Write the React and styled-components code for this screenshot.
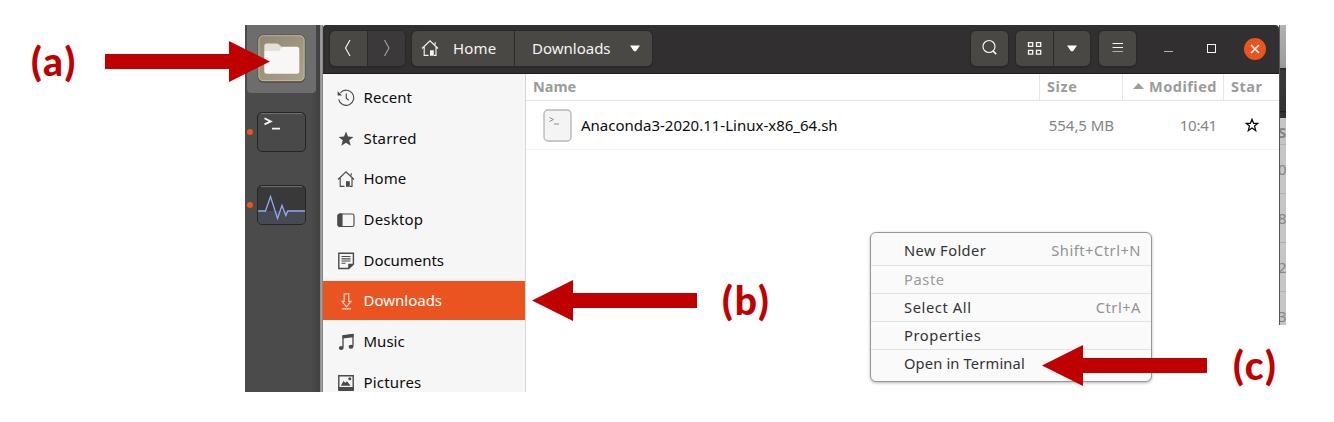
import React from "react";
import styled, { createGlobalStyle } from "styled-components";

const Global = createGlobalStyle`
  * { box-sizing: border-box; }
  body { margin: 0; background: #fff; font-family: "Noto Sans", "Open Sans", sans-serif; font-size: 15px; }
  svg { display: block; flex: none; }
`;

const Page = styled.main`
  position: relative;
  width: 1334px;
  height: 422px;
  overflow: hidden;
  padding: 25px 0 0 245px;
`;
const Desktop = styled.div`
  display: flex;
  width: 1041px;
  height: 367px;
  overflow: hidden;
`;
const Text = styled.span`
  letter-spacing: ${(p) => p.$ls || 0}px;
  white-space: pre;
`;

/* dock */
const Dock = styled.aside`
  width: 75px;
  background: linear-gradient(90deg, #4b4b4b 0, #4b4b4b 66px, #414141 74px);
`;
const DockSlot = styled.div`
  display: flex;
  align-items: center;
  height: ${(p) => p.$h}px;
  padding-left: 2px;
`;
const ActiveSlot = styled.div`
  width: 69px;
  height: 68px;
  margin-left: 2px;
  padding: 9px 0 0 10px;
  background: #6d6d6d;
  border-radius: 0 0 4px 4px;
`;
const Dot = styled.i`
  width: 6px;
  height: 6px;
  border-radius: 50%;
  background: #e95420;
  margin-right: 4px;
`;
const Edge = styled.div`
  width: 3px;
  background: linear-gradient(90deg, #8b8b8b, #a0a0a0 50%, #777);
`;

/* window */
const Window = styled.section`
  width: 956px;
  display: flex;
  flex-direction: column;
  background: #fff;
`;
const HeaderBar = styled.header`
  display: flex;
  align-items: flex-start;
  height: 49px;
  padding: 6px 13px 0 7px;
  background: #322f30;
  border-bottom: 1px solid #1c1a1b;
  border-radius: 3px 4px 0 0;
`;
const ButtonGroup = styled.div`
  display: flex;
  height: 35px;
  margin-left: ${(p) => p.$gap || 0}px;
  border-radius: 5px;
  overflow: hidden;
  background: #4a4845;
  box-shadow: 0 0 0 1px #2a2828, 0 1px 2px #1f1d1d;
`;
const HeaderButton = styled.button`
  display: flex;
  align-items: center;
  justify-content: ${(p) => (p.$start ? "flex-start" : "center")};
  width: ${(p) => p.$w || 37}px;
  padding: 0 0 1px ${(p) => p.$start || 0}px;
  gap: ${(p) => p.$space || 0}px;
  border: 0;
  background: ${(p) => (p.$dim ? "#3b3939" : "transparent")};
  color: #f5f5f3;
  font: inherit;
  & + & { border-left: 1px solid #2b2929; }
`;
const Spacer = styled.div`flex: 1;`;
const Controls = styled.div`
  display: flex;
  align-items: center;
  height: 35px;
  margin-left: 28px;
`;
const Minimize = styled.i`
  width: 9px;
  height: 1px;
  margin-top: 6px;
  background: #b5b4b4;
`;
const Maximize = styled.i`
  width: 9px;
  height: 9px;
  margin: 0 28px 0 34px;
  border: 1px solid #f5f5f5;
`;
const Close = styled.div`
  display: grid;
  place-items: center;
  width: 22px;
  height: 22px;
  border-radius: 50%;
  background: #e95420;
`;
const Body = styled.div`
  display: flex;
  flex: 1;
  min-height: 0;
`;
const Sidebar = styled.nav`
  display: flex;
  flex-direction: column;
  gap: 1.7px;
  width: 203px;
  padding-top: 4px;
  background: #f6f6f6;
  border-right: 1px solid #d6d6d6;
  overflow: hidden;
`;
const Place = styled.div`
  display: flex;
  align-items: center;
  flex: none;
  gap: 8.5px;
  height: 39px;
  padding: 0 0 1px 14px;
  color: ${(p) => (p.$active ? "#fff" : "#0c0c0c")};
  background: ${(p) => (p.$active ? "#e95420" : "transparent")};
  svg { color: ${(p) => (p.$active ? "#fbd3c5" : "#4a4a4a")}; position: relative; top: 1px; }
`;
const Files = styled.div`flex: 1;`;
const Columns = styled.div`
  display: grid;
  grid-template-columns: 514px 83px 101px 55px;
  height: 27px;
  border-bottom: 1px solid #e2e2e2;
  color: #9b9b9b;
  font-weight: 700;
  font-size: 14.5px;
`;
const Column = styled.div`
  display: flex;
  align-items: center;
  justify-content: ${(p) => (p.$end ? "flex-end" : "flex-start")};
  gap: 5px;
  padding: 0 6px 2px 7px;
  border-right: 1px solid #e6e6e6;
  &:last-child { border: 0; }
`;
const FileRow = styled.div`
  display: grid;
  grid-template-columns: 514px 83px 101px 55px;
  height: 49px;
  border-bottom: 1px solid #f2f2f2;
  color: #858585;
`;
const Cell = styled.div`
  display: flex;
  align-items: center;
  justify-content: ${(p) => p.$align || "flex-end"};
  padding-right: ${(p) => p.$right || 0}px;
`;
const NameCell = styled.div`
  display: flex;
  align-items: center;
  gap: 9px;
  padding-left: 17px;
  color: #0c0c0c;
`;
const Behind = styled.div`
  width: 7px;
  height: 300px;
  border-left: 1px solid #555;
  background: linear-gradient(#b2b2b2 0, #9b9b9b 43px, #222 43px, #3a3838 46px, #333132 86px, #181818 86px, #333 88px, #333 93px, #c5c5c5 93px, #c5c5c5 100%);
  padding-top: 95px;
  overflow: hidden;
  color: #858585;
`;
const BehindRow = styled.div`
  height: ${(p) => p.$h}px;
  display: flex;
  align-items: center;
  border-bottom: 1px solid #b1b1b1;
  font-weight: ${(p) => (p.$bold ? 700 : 400)};
  span { margin-left: -2px; }
`;

/* context menu */
const Menu = styled.div`
  position: absolute;
  left: 870px;
  top: 232px;
  width: 282px;
  height: 150px;
  padding-top: 4px;
  border: 1px solid #979797;
  border-radius: 6px;
  background: #fafafa;
  box-shadow: 0 1px 3px rgba(0, 0, 0, 0.3);
  font-size: 14.7px;
`;
const MenuItem = styled.div`
  display: flex;
  align-items: center;
  justify-content: space-between;
  height: 28px;
  padding: 0 10px 2px 33px;
  color: ${(p) => (p.$disabled ? "#9b9b9b" : "#333")};
  &:not(:last-child) { border-bottom: 1px solid #e3e3e3; }
  &:first-child { height: 29px; }
`;
const Shortcut = styled(Text)`color: #929292;`;

/* annotations */
const Arrow = styled.svg`
  position: absolute;
  left: ${(p) => p.$x}px;
  top: ${(p) => p.$y}px;
`;
const Mark = styled.div`
  position: absolute;
  left: ${(p) => p.$x}px;
  top: ${(p) => p.$y}px;
  color: #c00000;
  font: 900 39px/40px Lato, sans-serif;
  letter-spacing: 2px;
`;

const Pointer = ({ x, y, right }) => (
  <Arrow $x={x} $y={y} width="165" height="42" viewBox="0 0 165 42">
    <path
      fill="#c00000"
      transform={right ? "translate(165 0) scale(-1 1)" : undefined}
      d="M0 20.5 41 0v13h124v15H41v13z"
    />
  </Arrow>
);

const Icon = ({ children, size = 18, ...rest }) => (
  <svg width={size} height={size} viewBox="0 0 18 18" fill="none" stroke="currentColor" strokeWidth="1.15" {...rest}>
    {children}
  </svg>
);
const HomeIcon = () => (
  <Icon>
    <path d="M1 9.5 9 1.8l8 7.7M3.2 8v8.4h4.3M15 8v8.4h-2M14.2 3.2v2.4" />
    <path d="M9 16.8v-5.6h3.8v5.6z" fill="currentColor" stroke="none" />
  </Icon>
);
const icons = {
  Recent: (
    <Icon>
      <path d="M3.4 3.8a7.6 7.6 0 1 1-1.7 6.6M9.3 4.6v4.6l2.4 2" />
      <path d="M.6 2.2v4.2h4.6z" fill="currentColor" stroke="none" />
    </Icon>
  ),
  Starred: (
    <Icon>
      <path fill="currentColor" stroke="none" d="m9 1.6 2 5 5.4.3-4.2 3.4 1.5 5.5L9 12.8l-4.7 3 1.5-5.5-4.2-3.4L7 6.6z" />
    </Icon>
  ),
  Home: <HomeIcon />,
  Desktop: (
    <Icon>
      <rect x="1" y="3" width="16" height="12.5" rx="1.8" />
      <path d="M1 4.5 2.5 3H5v12.5H2.5L1 14z" fill="currentColor" />
    </Icon>
  ),
  Documents: (
    <Icon>
      <path d="M1.8 1.2h14.6v10.9l-4.7 4.4H1.8z" strokeWidth="1.4" />
      <path d="M4.5 4.5h9M4.5 6.8h9M4.5 9h9M4.5 11.2h4" />
      <path d="M11.2 17v-5.2h5.4z" fill="currentColor" stroke="none" />
    </Icon>
  ),
  Downloads: (
    <Icon>
      <path d="M7.2 1.8h4.6v7.5H14l-4.500 5.500L5 9.300h2.200zM5 16.800h9" />
    </Icon>
  ),
  Music: (
    <Icon>
      <path d="M6 14.5V2.8l10-1.3v11.8" strokeWidth="1.3" />
      <path d="M5.5 2.4 16.5 1v3.2l-11 1.3z" fill="currentColor" stroke="none" />
      <ellipse cx="4.2" cy="15" rx="2.4" ry="2" fill="currentColor" stroke="none" />
      <ellipse cx="14" cy="13.7" rx="2.4" ry="2" fill="currentColor" stroke="none" />
    </Icon>
  ),
  Pictures: (
    <Icon>
      <path d="M1.8 1.8h14.4v13.6H1.8z" strokeWidth="1.4" />
      <path d="M1.2 13h15.6v4H1.2zM3.8 11.8 6.5 7l1.8 1.8L10 7.2l3.6 4.6z" fill="currentColor" stroke="none" />
      <circle cx="12.8" cy="4.8" r="1.5" fill="currentColor" stroke="none" />
    </Icon>
  ),
};
const Caret = () => (
  <svg width="10" height="7"><path d="M0 .5h10L6 6.2H4z" fill="#fff" /></svg>
);

const FolderApp = () => (
  <svg width="49" height="50" viewBox="0 0 49 50">
    <defs>
      <linearGradient id="tan" x1="0" y1="0" x2="1" y2="1"><stop offset="0" stopColor="#8f8770" /><stop offset="1" stopColor="#aaa28c" /></linearGradient>
    </defs>
    <rect x="1" y="1.2" width="47" height="47.6" rx="5" fill="#39362f" opacity=".55" />
    <rect x="1" y="1" width="47" height="46.5" rx="5" fill="url(#tan)" stroke="#4b473c" strokeWidth=".8" />
    <rect x="1.9" y="1.7" width="45.2" height="45" rx="4.2" fill="none" stroke="#cbc3aa" strokeWidth=".8" />
    <path d="M7.3 13V12a2.5 2.5 0 0 1 2.5-2.5h10c2.5 0 3 3 5 3v4.5H7.3z" fill="#e4e0d5" />
    <path d="M7.3 17h14.5c1.5 0 2-4.2 4-4.2h14a2.5 2.5 0 0 1 2.5 2.5v22a2.5 2.5 0 0 1-2.5 2.5h-30a2.5 2.5 0 0 1-2.5-2.5z" fill="#f8f7f6" />
  </svg>
);
const Tile = ({ fill, children }) => (
  <svg width="49" height="40" viewBox="0 0 49 40">
    <rect x=".5" y=".5" width="48" height="39" rx="4.5" fill={fill} stroke="#252525" />
    <path d="M4 1.6h41" stroke="#717171" />
    {children}
  </svg>
);

const places = [
  ["Recent", 0.05], ["Starred", 0.2], ["Home", 0], ["Desktop", 0.2],
  ["Documents", -0.05], ["Downloads", 0], ["Music", 0], ["Pictures", 0.2],
];
const menu = [
  { label: "New Folder", keys: "Shift+Ctrl+N", ls: 0.4, kls: 0.5 },
  { label: "Paste", disabled: true, ls: 0.6 },
  { label: "Select All", keys: "Ctrl+A", ls: 0.6, kls: 0.5 },
  { label: "Properties", ls: 0.6 },
  { label: "Open in Terminal", ls: 0.15 },
];

export default function App() {
  return (
    <Page>
      <Global />
      <Desktop>
        <Dock>
          <ActiveSlot><FolderApp /></ActiveSlot>
          <DockSlot $h={78}>
            <Dot />
            <Tile fill="#494949">
              <path d="m7.5 6.2 6.3 3.2-6.3 3M15 16.7h8" fill="none" stroke="#f5f5f5" strokeWidth="1.8" />
            </Tile>
          </DockSlot>
          <DockSlot $h={68}>
            <Dot />
            <Tile fill="#393939">
              <path d="M1 26h47v9a4 4 0 0 1-4 4H5a4 4 0 0 1-4-4z" fill="#474a52" />
              <path d="M1 26h7.5L13.5 11.5 20.5 33.5 25 20.5l3.8 10 2-4.5H48" fill="none" stroke="#8fabf0" strokeWidth="1.3" />
            </Tile>
          </DockSlot>
        </Dock>
        <Edge />
        <Window>
          <HeaderBar>
            <ButtonGroup>
              <HeaderButton><Icon><path d="M10 1 5.5 9l4.500 8" /></Icon></HeaderButton>
              <HeaderButton $dim $w={38}><Icon opacity=".55"><path d="m6.5 1 4.5 8-4.5 8" /></Icon></HeaderButton>
            </ButtonGroup>
            <ButtonGroup $gap={7}>
              <HeaderButton $w={102} $start={9} $space={14}><HomeIcon /><Text $ls={0.2}>Home</Text></HeaderButton>
              <HeaderButton $w={138} $start={17} $space={19}><Text>Downloads</Text><Caret /></HeaderButton>
            </ButtonGroup>
            <Spacer />
            <ButtonGroup>
              <HeaderButton><Icon><circle cx="8" cy="7.5" r="6" /><path d="m12 12 3.200 3.200" strokeWidth="1.7" /></Icon></HeaderButton>
            </ButtonGroup>
            <ButtonGroup $gap={8}>
              <HeaderButton><Icon strokeWidth="1.3"><path d="M2.5 3.600h4.200v3.800H2.500zM10.500 3.600h4.200v3.800h-4.200zM2.500 11.400h4.200v3.800H2.500zM10.500 11.400h4.200v3.800h-4.200z" /></Icon></HeaderButton>
              <HeaderButton><Caret /></HeaderButton>
            </ButtonGroup>
            <ButtonGroup $gap={9}>
              <HeaderButton><Icon><path d="M3.5 4.5h10.500M3.500 8.500h10.500" /><path d="M3.500 12.500h10.500" opacity=".6" /></Icon></HeaderButton>
            </ButtonGroup>
            <Controls>
              <Minimize /><Maximize />
              <Close><svg width="10" height="10"><path d="m1 1 8 8m0-8L1 9" stroke="#fff" strokeWidth="1.5" /></svg></Close>
            </Controls>
          </HeaderBar>
          <Body>
            <Sidebar>
              {places.map(([name, ls]) => (
                <Place key={name} $active={name === "Downloads"}>
                  {icons[name]}
                  <Text $ls={ls}>{name}</Text>
                </Place>
              ))}
            </Sidebar>
            <Files>
              <Columns>
                <Column><Text>Name</Text></Column>
                <Column><Text $ls={0.6}>Size</Text></Column>
                <Column $end>
                  <svg width="11" height="6"><path d="M0 6 5.5 0 11 6z" fill="#a0a0a0" /></svg>
                  <Text $ls={0.5}>Modified</Text>
                </Column>
                <Column><Text $ls={0.5}>Star</Text></Column>
              </Columns>
              <FileRow>
                <NameCell>
                  <svg width="29" height="33" viewBox="0 0 29 33">
                    <rect x="1" y="1" width="27" height="31" rx="4" fill="#f4f4f4" stroke="#b8b8b8" strokeWidth="1.4" />
                    <path d="m6.5 8.5 4 2-4 2M11 15h5" fill="none" stroke="#8e8e8e" />
                  </svg>
                  <Text>Anaconda3-2020.11-Linux-x86_64.sh</Text>
                </NameCell>
                <Cell $right={9}><Text $ls={-0.05}>554,5 MB</Text></Cell>
                <Cell $right={7}><Text $ls={-0.2}>10:41</Text></Cell>
                <Cell $align="center">
                  <svg width="14" height="14" viewBox="0 0 14 14"><path d="m7 1.3 1.6 4h4.2L9.5 8l1.2 4.6L7 10l-3.7 2.6L4.5 8 1.2 5.3h4.2z" fill="none" stroke="#111" strokeWidth="1.3" /></svg>
                </Cell>
              </FileRow>
            </Files>
          </Body>
        </Window>
        <Behind>
          <BehindRow $h={25} $bold><span>S</span></BehindRow>
          <BehindRow $h={49}><span>0</span></BehindRow>
          <BehindRow $h={49}><span>8</span></BehindRow>
          <BehindRow $h={49}><span>2</span></BehindRow>
          <BehindRow $h={49}><span>3</span></BehindRow>
        </Behind>
      </Desktop>
      <Menu>
        {menu.map((m) => (
          <MenuItem key={m.label} $disabled={m.disabled}>
            <Text $ls={m.ls}>{m.label}</Text>
            {m.keys && <Shortcut $ls={m.kls}>{m.keys}</Shortcut>}
          </MenuItem>
        ))}
      </Menu>
      <Mark $x={31} $y={41}>(a)</Mark>
      <Pointer x={105} y={41} right />
      <Mark $x={722} $y={280}>(b)</Mark>
      <Pointer x={532} y={280} />
      <Mark $x={1233} $y={345}>(c)</Mark>
      <Pointer x={1042} y={345} />
    </Page>
  );
}
